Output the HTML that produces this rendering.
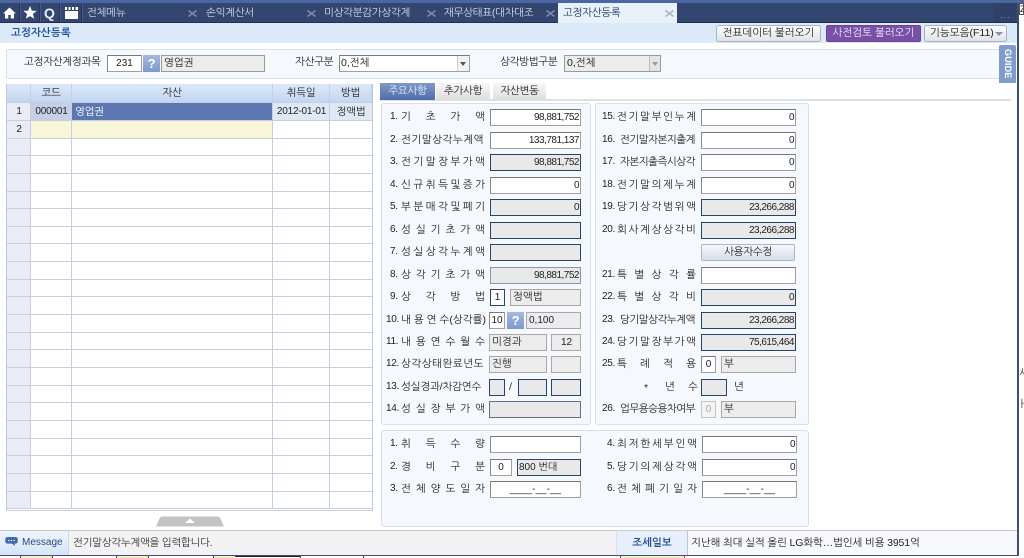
<!DOCTYPE html>
<html lang="ko"><head><meta charset="utf-8"><title>고정자산등록</title>
<style>
html,body{margin:0;padding:0;background:#fff}
body{position:relative;width:1024px;height:558px;overflow:hidden;font:10.5px/14px "Liberation Sans","NanumGothic","Noto Sans CJK KR",sans-serif;color:#222;letter-spacing:-.3px}
div,span,svg{position:absolute;box-sizing:border-box}
.t{white-space:nowrap}
.c{text-align:center}
.nav{color:#d5dce9;top:6px;white-space:nowrap}
.xx{top:10px}
.sep{top:3px;height:19px;background:#24365c;border-right:1px solid #47598a;width:2px}
.p{background:#f5f8fd;border:1px solid #d5e0ef;border-radius:3px}
.l{height:14px;text-align:justify;text-align-last:justify;white-space:normal;overflow:hidden;word-spacing:-1.5px;letter-spacing:0}
.u{white-space:nowrap;letter-spacing:-.5px}
.v{white-space:nowrap;letter-spacing:.5px}
.n{white-space:nowrap;font-size:10px;letter-spacing:-.3px}
.w,.g,.h{height:17px;font-size:10px;line-height:15px;padding:0 1px;text-align:right;letter-spacing:-.5px;white-space:nowrap}
.w{background:#fff;border:1px solid #a0a0a0;border-top-color:#777;border-left-color:#888}
.g{background:#e9e9e9;border:1px solid #24466e}
.h{background:#ececec;border:1px solid #a8a8a8;text-align:left;padding-left:2px;font-size:10.5px;letter-spacing:0}
.b{text-align:center;letter-spacing:0}
.q{background:linear-gradient(#a5b8e0,#7f97cc);color:#fff;font:bold 13px/17px "Liberation Sans",sans-serif;text-align:center;height:17px}
.th{top:84px;height:18px;background:linear-gradient(#dce8f8,#c3d7f2);text-align:center;line-height:18px;border-right:1px solid #c5cfe2}
.btn{top:25px;height:17px;border:1px solid #a9b2c0;border-radius:3px;background:linear-gradient(#fdfdfd,#dfe3ea);text-align:center;line-height:15px;white-space:nowrap;letter-spacing:0}
.tab{top:83px;height:17px;text-align:center;line-height:16px;background:linear-gradient(#f7f7f7,#dedede)}
</style></head><body>

<!-- top nav -->
<div style="left:0;top:0;width:1024px;height:3px;background:#4a66a3"></div>
<div style="left:0;top:3px;width:1018px;height:20px;background:#33466f;border-bottom:1px solid #1f3056"></div>
<svg style="left:3px;top:7px" width="13" height="12" viewBox="0 0 13 12"><path d="M6.5 .5L0 6.5h2v5h3.3V8h2.4v3.5H11v-5h2z" fill="#fff"/></svg>
<div class="sep" style="left:19px"></div>
<svg style="left:23px;top:6px" width="14" height="13" viewBox="0 0 14 13"><path d="M7 0l1.800 4.600 4.900.3-3.800 3.100 1.300 4.800L7 10.100l-4.200 2.700 1.300-4.800L.3 4.900l4.900-.3z" fill="#fff"/></svg>
<div class="sep" style="left:39px"></div>
<div class="t" style="left:44px;top:5px;color:#e8eef8;font:bold 14px/16px 'Liberation Sans',sans-serif">Q</div>
<div class="sep" style="left:59px"></div>
<svg style="left:65px;top:7px" width="13" height="12" viewBox="0 0 13 12"><path d="M0 4h13v8H0zM0 0h2v3H0zM3.500 0h2v3h-2zM7 0h2v3H7zM10.500 0H13v3h-2.500z" fill="#fff"/></svg>
<div class="sep" style="left:81px"></div>
<div class="nav" style="left:87px">전체메뉴</div>
<svg class="xx" style="left:188px" width="9" height="7"><path d="M.5 .5L8.500 6.500M8.500 .5L.5 6.500" stroke="#7d8cab" stroke-width="1.500"/></svg><div class="nav" style="left:206px">손익계산서</div>
<svg class="xx" style="left:307px" width="9" height="7"><path d="M.5 .5L8.500 6.500M8.500 .5L.5 6.500" stroke="#7d8cab" stroke-width="1.500"/></svg><div class="nav" style="left:324px">미상각분감가상각계</div>
<svg class="xx" style="left:427px" width="9" height="7"><path d="M.5 .5L8.500 6.500M8.500 .5L.5 6.500" stroke="#7d8cab" stroke-width="1.500"/></svg><div class="nav" style="left:444px">재무상태표(대차대조</div>
<svg class="xx" style="left:546px" width="9" height="7"><path d="M.5 .5L8.500 6.500M8.500 .5L.5 6.500" stroke="#7d8cab" stroke-width="1.500"/></svg>
<div style="left:558px;top:3px;width:119px;height:20px;background:#e8f0fa"></div>
<div class="t" style="left:563px;top:6px;color:#1d3564">고정자산등록</div>
<svg class="xx" style="left:665px" width="9" height="7"><path d="M.5 .5L8.500 6.500M8.500 .5L.5 6.500" stroke="#a9b4c6" stroke-width="1.500"/></svg>
<div style="left:993px;top:3px;width:25px;height:19px;background:#2f4168"></div>
<div class="t" style="left:1000px;top:8px;color:#8f9bb5;font-size:9px;letter-spacing:1px">...</div>

<!-- sub header -->
<div style="left:0;top:23px;width:1018px;height:20px;background:#dce9f8"></div>
<div class="t" style="left:11px;top:26px;color:#1f4f9c;font-weight:bold;letter-spacing:.1px">고정자산등록</div>
<div class="btn" style="left:716px;width:105px">전표데이터 불러오기</div>
<div class="btn" style="left:826px;width:95px;background:#7a4fa8;border-color:#6a4396;border-radius:2px;color:#f3ecfa">사전검토 불러오기</div>
<div class="btn" style="left:924px;width:83px;text-align:left;padding-left:5px">기능모음(F11)</div>
<div style="left:995px;top:32px;border:4px solid transparent;border-top:4px solid #8a92a0"></div>

<!-- filter bar -->
<div style="left:6px;top:49px;width:994px;height:30px;background:#f5f8fc;border:1px solid #d6e0ee;border-radius:2px"></div>
<div class="t" style="left:24px;top:55px">고정자산계정과목</div>
<div class="w b" style="left:107px;top:55px;width:35px">231</div>
<div class="q" style="left:143px;top:55px;width:17px">?</div>
<div class="h" style="left:161px;top:55px;width:104px;border-color:#9a9a9a">영업권</div>
<div class="t" style="left:295px;top:55px">자산구분</div>
<div class="w" style="left:339px;top:55px;width:131px;text-align:left;font-size:10.5px;letter-spacing:0">0,전체</div>
<div style="left:457px;top:56px;width:12px;height:15px;background:#f2f2f2;border-left:1px solid #ccc"></div>
<div style="left:460px;top:62px;border:3px solid transparent;border-top:4px solid #555"></div>
<div class="t" style="left:500px;top:55px">상각방법구분</div>
<div class="h" style="left:564px;top:55px;width:97px;border-color:#9a9a9a">0,전체</div>
<div style="left:649px;top:56px;width:11px;height:15px;background:#e4e4e4;border-left:1px solid #bbb"></div>
<div style="left:652px;top:62px;border:3px solid transparent;border-top:4px solid #999"></div>
<div style="left:999px;top:45px;width:17px;height:38px;background:#7f9ccc;border-radius:2px 2px 0 0"></div>
<div class="t" style="left:1001px;top:49px;color:#fff;font:bold 9px/13px 'Liberation Sans',sans-serif;writing-mode:vertical-rl;letter-spacing:.2px">GUIDE</div>

<!-- grid -->
<div style="left:7px;top:103px;width:24px;height:405px;background:#e9ecf4"></div>
<div class="th" style="left:7px;width:24px"></div>
<div class="th" style="left:31px;width:41px">코드</div>
<div class="th" style="left:72px;width:201px">자산</div>
<div class="th" style="left:273px;width:57px">취득일</div>
<div class="th" style="left:330px;width:42px">방법</div>
<div style="left:31px;top:103px;width:41px;height:17px;background:#c4d0e6"></div>
<div style="left:72px;top:103px;width:201px;height:17px;background:#5b76b0"></div>
<div style="left:273px;top:103px;width:99px;height:17px;background:#dfe8f5"></div>
<div style="left:31px;top:121px;width:241px;height:17px;background:#f7f6d9"></div>
<svg style="left:0;top:0" width="380" height="515"><path d="M6 102.500H372M6 120.500H372M6 138.500H372M6 155.500H372M6 173.500H372M6 191.500H372M6 208.500H372M6 226.500H372M6 243.500H372M6 261.500H372M6 279.500H372M6 296.500H372M6 314.500H372M6 332.500H372M6 349.500H372M6 367.500H372M6 385.500H372M6 402.500H372M6 420.500H372M6 438.500H372M6 455.500H372M6 473.500H372M6 491.500H372M6 508.500H372M6 510.500H372M30.500 103V509M71.500 103V509M272.500 103V509M329.500 103V509" stroke="#c6cfe0" fill="none"/><path d="M6.500 84V511M372.500 84V511" stroke="#c0c9dc" fill="none"/></svg>
<div class="c" style="left:7px;top:105px;width:24px;font-size:10px">1</div>
<div class="c" style="left:7px;top:123px;width:24px;font-size:10px">2</div>
<div class="c" style="left:31px;top:105px;width:41px;font-size:10px;letter-spacing:-.2px">000001</div>
<div class="t" style="left:75px;top:105px;color:#fff">영업권</div>
<div class="c" style="left:273px;top:105px;width:57px;font-size:10px;letter-spacing:-.2px">2012-01-01</div>
<div class="c" style="left:330px;top:105px;width:42px">정액법</div>
<svg style="left:156px;top:516px" width="68" height="11"><path d="M0 10.500L4 1.500Q5 .5 7 .5H61Q63 .5 64 1.500L68 10.500z" fill="#c3c3c3"/><path d="M29 7L34 2.500 39 7z" fill="#fff"/></svg>

<!-- tabs -->
<div style="left:380px;top:99px;width:631px;height:2px;background:#dfdfdf"></div>
<div class="tab" style="left:380px;width:55px;background:linear-gradient(#7d97c9,#4f6ea8);color:#e8eefa">주요사항</div>
<div class="tab" style="left:436px;width:54px">추가사항</div>
<div class="tab" style="left:493px;width:53px">자산변동</div>

<!-- panels -->
<div class="p" style="left:381px;top:103px;width:210px;height:322px"></div>
<div class="p" style="left:595px;top:103px;width:214px;height:322px"></div>
<div class="p" style="left:381px;top:430px;width:428px;height:97px"></div>

<!-- panel 1 -->
<div class="n" style="left:390px;top:110px">1.</div><div class="l" style="left:401px;top:110px;width:84px">기 초 가 액</div><div class="w" style="left:490px;top:109px;width:91px">98,881,752</div>
<div class="n" style="left:390px;top:133px">2.</div><div class="v" style="left:401px;top:133px">전기말상각누계액</div><div class="w" style="left:490px;top:132px;width:91px">133,781,137</div>
<div class="n" style="left:390px;top:155px">3.</div><div class="l" style="left:401px;top:155px;width:84px">전 기 말 장 부 가 액</div><div class="g" style="left:490px;top:154px;width:91px">98,881,752</div>
<div class="n" style="left:390px;top:178px">4.</div><div class="l" style="left:401px;top:178px;width:84px">신 규 취 득 및 증 가</div><div class="w" style="left:490px;top:177px;width:91px">0</div>
<div class="n" style="left:390px;top:200px">5.</div><div class="l" style="left:401px;top:200px;width:84px">부 분 매 각 및 폐 기</div><div class="g" style="left:490px;top:199px;width:91px">0</div>
<div class="n" style="left:390px;top:223px">6.</div><div class="l" style="left:401px;top:223px;width:84px">성 실 기 초 가 액</div><div class="g" style="left:490px;top:222px;width:91px"></div>
<div class="n" style="left:390px;top:245px">7.</div><div class="l" style="left:401px;top:245px;width:84px">성 실 상 각 누 계 액</div><div class="g" style="left:490px;top:244px;width:91px"></div>
<div class="n" style="left:390px;top:268px">8.</div><div class="l" style="left:401px;top:268px;width:84px">상 각 기 초 가 액</div><div class="g" style="left:490px;top:267px;width:91px;border-color:#8a96a6">98,881,752</div>
<div class="n" style="left:390px;top:290px">9.</div><div class="l" style="left:401px;top:290px;width:84px">상 각 방 법</div><div class="w b" style="left:490px;top:289px;width:15px;border-color:#24466e">1</div><div class="h" style="left:510px;top:289px;width:71px">정액법</div>
<div class="n" style="left:386px;top:313px">10.</div><div class="l" style="left:401px;top:313px;width:85px">내 용 연 수(상각률)</div><div class="w b" style="left:489px;top:312px;width:16px;font-size:10px">10</div><div class="q" style="left:507px;top:312px;width:17px">?</div><div class="h" style="left:526px;top:312px;width:55px;font-size:10px">0,100</div>
<div class="n" style="left:386px;top:335px">11.</div><div class="l" style="left:401px;top:335px;width:84px">내 용 연 수 월 수</div><div class="h" style="left:489px;top:334px;width:58px">미경과</div><div class="h b" style="left:551px;top:334px;width:30px;font-size:10px">12</div>
<div class="n" style="left:386px;top:357px">12.</div><div class="v" style="left:401px;top:357px">상각상태완료년도</div><div class="h" style="left:489px;top:356px;width:58px">진행</div><div class="h" style="left:551px;top:356px;width:30px"></div>
<div class="n" style="left:386px;top:380px">13.</div><div class="t" style="left:401px;top:380px;letter-spacing:-.2px">성실경과/차감연수</div><div class="g" style="left:489px;top:379px;width:16px"></div><div class="t" style="left:509px;top:380px">/</div><div class="g" style="left:518px;top:379px;width:29px"></div><div class="g" style="left:551px;top:379px;width:30px"></div>
<div class="n" style="left:386px;top:402px">14.</div><div class="l" style="left:401px;top:402px;width:84px">성 실 장 부 가 액</div><div class="g" style="left:489px;top:401px;width:92px;border-color:#5e7288"></div>

<!-- panel 2 -->
<div class="n" style="left:602px;top:110px">15.</div><div class="l" style="left:617px;top:110px;width:79px">전 기 말 부 인 누 계</div><div class="w" style="left:701px;top:109px;width:95px">0</div>
<div class="n" style="left:602px;top:133px">16.</div><div class="u" style="left:620px;top:133px">전기말자본지출계</div><div class="w" style="left:701px;top:132px;width:95px">0</div>
<div class="n" style="left:602px;top:155px">17.</div><div class="u" style="left:620px;top:155px">자본지출즉시상각</div><div class="w" style="left:701px;top:154px;width:95px">0</div>
<div class="n" style="left:602px;top:178px">18.</div><div class="l" style="left:617px;top:178px;width:79px">전 기 말 의 제 누 계</div><div class="w" style="left:701px;top:177px;width:95px">0</div>
<div class="n" style="left:602px;top:200px">19.</div><div class="l" style="left:617px;top:200px;width:79px">당 기 상 각 범 위 액</div><div class="g" style="left:701px;top:199px;width:95px">23,266,288</div>
<div class="n" style="left:602px;top:223px">20.</div><div class="l" style="left:617px;top:223px;width:79px">회 사 계 상 상 각 비</div><div class="g" style="left:701px;top:222px;width:95px">23,266,288</div>
<div class="c t" style="left:701px;top:244px;width:94px;height:17px;line-height:15px;border:1px solid #a9b6cc;border-radius:2px;background:linear-gradient(#f4f6fa,#d8dfea)">사용자수정</div>
<div class="n" style="left:602px;top:268px">21.</div><div class="l" style="left:617px;top:268px;width:79px">특 별 상 각 률</div><div class="w" style="left:701px;top:267px;width:95px"></div>
<div class="n" style="left:602px;top:290px">22.</div><div class="l" style="left:617px;top:290px;width:79px">특 별 상 각 비</div><div class="g" style="left:701px;top:289px;width:95px">0</div>
<div class="n" style="left:602px;top:313px">23.</div><div class="u" style="left:620px;top:313px">당기말상각누계액</div><div class="g" style="left:701px;top:312px;width:95px">23,266,288</div>
<div class="n" style="left:602px;top:335px">24.</div><div class="l" style="left:617px;top:335px;width:79px">당 기 말 장 부 가 액</div><div class="g" style="left:701px;top:334px;width:95px">75,615,464</div>
<div class="n" style="left:602px;top:357px">25.</div><div class="l" style="left:617px;top:357px;width:79px">특 례 적 용</div><div class="w b" style="left:701px;top:356px;width:15px;font-size:10px">0</div><div class="h" style="left:721px;top:356px;width:75px">부</div>
<div class="t" style="left:644px;top:381px">*</div><div class="t" style="left:665px;top:380px">년</div><div class="t" style="left:688px;top:380px">수</div><div class="g" style="left:701px;top:379px;width:26px"></div><div class="t" style="left:734px;top:380px">년</div>
<div class="n" style="left:602px;top:402px">26.</div><div class="u" style="left:620px;top:402px">업무용승용차여부</div><div class="w b" style="left:701px;top:401px;width:15px;font-size:10px;color:#aaa;background:#f3f3f3;border-color:#c4c4c4">0</div><div class="h" style="left:721px;top:401px;width:75px">부</div>

<!-- panel 3 -->
<div class="n" style="left:390px;top:437px">1.</div><div class="l" style="left:401px;top:437px;width:84px">취 득 수 량</div><div class="w" style="left:490px;top:436px;width:91px"></div>
<div class="n" style="left:390px;top:460px">2.</div><div class="l" style="left:401px;top:460px;width:84px">경 비 구 분</div><div class="w b" style="left:490px;top:459px;width:22px;font-size:10px">0</div><div class="g" style="left:517px;top:459px;width:64px;text-align:left;letter-spacing:0">800 번대</div>
<div class="n" style="left:390px;top:482px">3.</div><div class="l" style="left:401px;top:482px;width:84px">전 체 양 도 일 자</div><div class="w b" style="left:490px;top:481px;width:91px;font-size:10px">____-__-__</div>
<div class="n" style="left:607px;top:437px">4.</div><div class="l" style="left:617px;top:437px;width:80px">최 저 한 세 부 인 액</div><div class="w" style="left:702px;top:436px;width:95px">0</div>
<div class="n" style="left:607px;top:460px">5.</div><div class="l" style="left:617px;top:460px;width:80px">당 기 의 제 상 각 액</div><div class="w" style="left:702px;top:459px;width:95px">0</div>
<div class="n" style="left:607px;top:482px">6.</div><div class="l" style="left:617px;top:482px;width:80px">전 체 폐 기 일 자</div><div class="w b" style="left:702px;top:481px;width:95px;font-size:10px">____-__-__</div>

<!-- status bar -->
<div style="left:0;top:530px;width:1018px;height:1px;background:#c9c9c9"></div>
<div style="left:0;top:531px;width:68px;height:24px;background:linear-gradient(#eef4fc,#d6e5f9)"></div>
<div style="left:68px;top:531px;width:548px;height:24px;background:#f2f2f2;border-left:1px solid #d5d5d5"></div>
<div style="left:616px;top:531px;width:72px;height:24px;background:#e6effb;border-left:1px solid #d7e2f2;border-right:1px solid #bcc6d6"></div>
<div style="left:688px;top:531px;width:330px;height:24px;background:#f6f8fc"></div>
<svg style="left:5px;top:537px" width="13" height="10" viewBox="0 0 15 12"><path d="M3 0h9q3 0 3 3v2q0 3-3 3h-1l1 3-4-3H3Q0 8 0 5V3q0-3 3-3z" fill="#3e6aa8"/><path d="M3.500 3.500h1.500v1.500H3.500zM6.700 3.500h1.500v1.500H6.700zM10 3.500h1.500v1.500H10z" fill="#fff"/></svg>
<div class="t" style="left:22px;top:536px;color:#2f4a7c;font-size:10px;letter-spacing:0">Message</div>
<div class="t" style="left:73px;top:536px;color:#333">전기말상각누계액을 입력합니다.</div>
<div class="t c" style="left:616px;top:536px;width:72px;color:#254f94;font-weight:bold;letter-spacing:0">조세일보</div>
<div class="t" style="left:691px;top:536px;color:#222;letter-spacing:-.15px">지난해 최대 실적 올린 LG화학…법인세 비용 3951억</div>

<!-- window edges -->
<div style="left:1017px;top:3px;width:2px;height:553px;background:#3f4f70"></div>
<div style="left:0;top:555px;width:1019px;height:1px;background:#3f4f70"></div>
<div style="left:1019px;top:3px;width:5px;height:12px;border:1px solid #555;font-size:9px;line-height:10px;overflow:hidden">Z</div>
<div class="t" style="left:1019px;top:367px;font-size:10px">시</div>
<div class="t" style="left:1018px;top:398px;font-size:10px">ㅏ,</div>

<!-- strip below window -->
<div style="left:21px;top:556px;width:31px;height:2px;background:#f7efc4"></div>
<div style="left:117px;top:556px;width:31px;height:2px;background:#f7efc4"></div>
<div style="left:213px;top:556px;width:22px;height:2px;background:#f7efc4"></div>
<div style="left:235px;top:556px;width:65px;height:1px;background:#222"></div>
<div style="left:621px;top:556px;width:64px;height:2px;background:#f7efc4;border-right:1px solid #d33"></div>
<svg style="left:0;top:556px" width="1024" height="2"><path d="M20.500 0V2M52.500 0V2M116.500 0V2M148.500 0V2M213.500 0V2M300.500 0V2M363.500 0V2M620.500 0V2" stroke="#444" fill="none"/></svg>
</body></html>
